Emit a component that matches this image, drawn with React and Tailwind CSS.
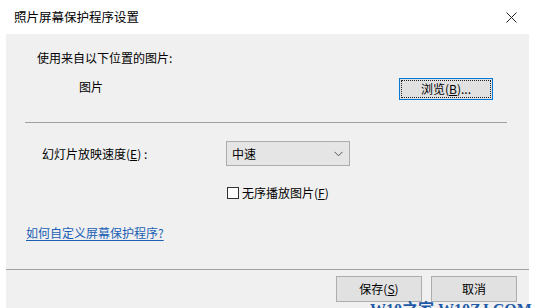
import React, { useState } from 'react';

const font = { fontFamily: '"Noto Sans CJK SC", "Microsoft YaHei", sans-serif' };

const App = () => {
    const [shuffle, setShuffle] = useState(false);

    return (
        <div className="relative w-[535px] h-[308px] bg-white overflow-hidden flex flex-col text-[12px] leading-[16px] text-black" style={font}>
            <div className="h-[34px] shrink-0 flex items-center justify-between pl-[14px] pr-[18px]">
                <span className="text-[12.5px]">照片屏幕保护程序设置</span>
                <svg width="11" height="11" viewBox="0 0 11 11" className="mt-[1px]">
                    <path d="M0.5 0.5 L10.5 10.5 M10.5 0.5 L0.5 10.5" stroke="#222" strokeWidth="1" fill="none" />
                </svg>
            </div>

            <div className="mx-[6px] flex-1 bg-[#f0f0f0] flex flex-col">
                <p className="mt-[16px] pl-[31px]">使用来自以下位置的图片:</p>

                <div className="mt-[12px] h-[22px] flex items-center justify-between pl-[73px] pr-[36px]">
                    <span className="mt-[-4px]">图片</span>
                    <button className="w-[94px] h-[22px] border border-[#0078d7] bg-[#e1e1e1] p-[1px]">
                        <span className="flex h-full w-full items-center justify-center border border-dotted border-[#222]">
                            浏览(<u>B</u>)...
                        </span>
                    </button>
                </div>

                <div className="mt-[22px] ml-[19px] mr-[22px] h-px bg-[#a0a0a0]" />

                <div className="mt-[18px] h-[25px] flex items-center pl-[36px]">
                    <span className="w-[184px]">幻灯片放映速度(<u>E</u>) :</span>
                    <div className="w-[124px] h-[25px] border border-[#acacac] bg-[#e5e5e5] flex items-center justify-between pl-[5px] pr-[6px]">
                        <span>中速</span>
                        <svg width="9" height="6" viewBox="0 0 9 6">
                            <path d="M0.5 0.8 L4.5 4.8 L8.5 0.8" stroke="#555" strokeWidth="1" fill="none" />
                        </svg>
                    </div>
                </div>

                <label className="mt-[19px] h-[16px] flex items-center pl-[221px] cursor-pointer">
                    <span
                        onClick={() => setShuffle(!shuffle)}
                        className="w-[12px] h-[12px] border border-[#333] bg-white mr-[3px] flex items-center justify-center text-[10px]"
                    >
                        {shuffle ? '✓' : ''}
                    </span>
                    <span>无序播放图片(<u>F</u>)</span>
                </label>

                <a href="#" className="mt-[24px] ml-[20px] self-start text-[#1a5fb4] underline underline-offset-2">
                    如何自定义屏幕保护程序?
                </a>

                <div className="mt-[28px] h-px bg-[#a0a0a0]" />

                <div className="mt-[6px] flex justify-end gap-[9px] pr-[12px]">
                    <button className="w-[86px] h-[26px] border border-[#adadad] bg-[#e1e1e1]">
                        保存(<u>S</u>)
                    </button>
                    <button className="w-[86px] h-[26px] border border-[#adadad] bg-[#e1e1e1]">
                        取消
                    </button>
                </div>
            </div>

            <div className="absolute left-[370px] top-[301px] whitespace-nowrap leading-[18px] text-[16px] font-bold text-[#1e5aa8]" style={{ fontFamily: '"Liberation Serif", "Noto Sans CJK SC", serif' }}>
                W10之家 W10ZJ.COM
            </div>
        </div>
    );
};

export default App;
